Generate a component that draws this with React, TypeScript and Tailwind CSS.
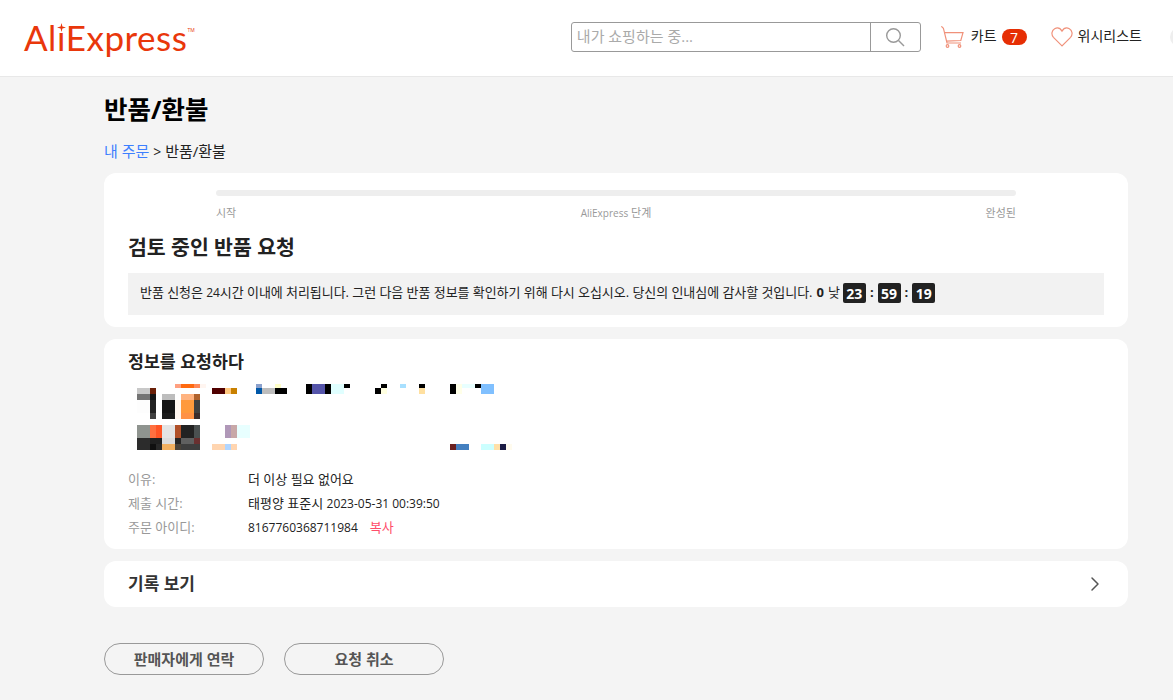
import { ChevronRight } from 'lucide-react';

type Block = [number, number, number, number, string];

// blurred product picture and title, page coords minus the svg origin (128, 384)
const mosaic: Block[] = [
  [175, 384, 6, 4, '#ffa080'], [181, 384, 13, 4, '#ff6a10'], [194, 384, 6, 4, '#ff8a5a'], [200, 384, 6, 4, '#fff5f0'],
  [137, 388, 13, 6, '#c8c8c8'], [150, 388, 6, 6, '#6a2008'],
  [137, 394, 13, 6, '#737373'], [150, 394, 6, 6, '#151515'], [162, 394, 13, 6, '#bdbdbd'], [181, 394, 13, 6, '#ffb380'], [194, 394, 6, 6, '#b0622c'],
  [137, 400, 13, 13, '#fdfdfd'], [150, 400, 6, 13, '#222222'], [162, 400, 13, 13, '#151515'], [175, 400, 6, 19, '#fff7f0'], [181, 400, 13, 13, '#ff9a3c'], [194, 400, 6, 13, '#404040'],
  [150, 413, 6, 6, '#404040'], [162, 413, 13, 6, '#1c1c1c'], [181, 413, 13, 6, '#ff9245'], [194, 413, 6, 6, '#3a2c2c'],
  [137, 425, 13, 13, '#8f948f'], [150, 425, 6, 13, '#ff7040'], [156, 425, 6, 13, '#ff5525'], [162, 425, 13, 13, '#e4e4e4'], [175, 425, 6, 13, '#b05028'], [181, 425, 13, 13, '#222222'], [194, 425, 6, 13, '#4a5050'],
  [137, 438, 13, 12, '#2c2c2c'], [150, 438, 12, 6, '#202020'], [162, 438, 13, 6, '#dcdcdc'], [175, 438, 6, 6, '#252525'], [181, 438, 13, 6, '#606060'], [194, 438, 6, 6, '#6a3030'],
  [150, 444, 6, 6, '#101010'], [156, 444, 6, 6, '#282828'], [162, 444, 13, 6, '#f2b060'], [175, 444, 6, 6, '#4a4238'], [181, 444, 19, 6, '#3e3e3e'],
  [212, 388, 13, 6, '#500000'], [225, 388, 6, 6, '#ffc880'], [231, 388, 6, 6, '#c88000'],
  [256, 384, 6, 4, '#8aa0cc'], [275, 384, 6, 4, '#ffffc8'], [256, 388, 6, 6, '#0058a8'], [262, 388, 13, 6, '#bdbdbd'], [275, 388, 12, 6, '#000000'],
  [306, 384, 6, 10, '#000000'], [312, 384, 13, 10, '#5555aa'], [325, 384, 6, 10, '#000000'], [331, 384, 13, 10, '#e0ffff'], [344, 384, 6, 4, '#000000'],
  [375, 388, 6, 6, '#000000'], [381, 384, 6, 4, '#000000'], [381, 388, 6, 6, '#ffffe0'], [400, 384, 6, 4, '#a8e0ff'],
  [419, 384, 6, 4, '#000000'], [419, 388, 6, 6, '#ffe0a0'],
  [450, 384, 6, 10, '#000000'], [456, 384, 6, 10, '#ffffe8'], [462, 384, 13, 4, '#e8ffff'], [475, 384, 6, 4, '#000000'], [481, 384, 13, 10, '#80c0ff'],
  [212, 444, 13, 6, '#ffd5b0'], [225, 444, 6, 6, '#b0d5ff'], [231, 444, 6, 6, '#ffd5b0'],
  [225, 425, 6, 13, '#b098b8'], [231, 425, 6, 13, '#c8a8a8'], [237, 425, 13, 13, '#e8ffff'],
  [450, 444, 6, 6, '#6a2020'], [456, 444, 13, 6, '#4480c0'], [481, 444, 13, 6, '#ccffff'], [494, 444, 6, 6, '#ffe0a8'], [500, 444, 6, 6, '#1c1c44'], [506, 444, 6, 6, '#fffbee'],
];

const Mosaic = () => (
  <svg width="384" height="66" viewBox="128 384 384 66" shapeRendering="crispEdges" className="block">
    {mosaic.map(([x, y, w, h, c], i) => (
      <rect key={i} x={x} y={y} width={w} height={h} fill={c} />
    ))}
  </svg>
);

const CartIcon = () => (
  <svg width="23" height="22" viewBox="0 0 23 22" fill="none" stroke="#f0917a" strokeWidth="1.2">
    <path d="M.3.3 2.4 2.2 6 17h14" />
    <path d="M3.5 6.7H22L19.8 14.5 5.2 15.2" />
    <circle cx="6.5" cy="20" r="1.3" />
    <circle cx="18.5" cy="20" r="1.3" />
  </svg>
);

const HeartIcon = () => (
  <svg width="22" height="20" viewBox="0 0 24 22" fill="none" stroke="#f0917a" strokeWidth="1.3">
    <path d="M12 20.8 2.6 11.4C-.2 8.4.7 3.6 3.9 1.9c3-1.5 6.3-.4 8.1 2.6 1.8-3 5.1-4.1 8.1-2.6 3.2 1.7 4.1 6.5 1.3 9.5z" />
  </svg>
);

const SearchIcon = () => (
  <svg width="20" height="20" viewBox="0 0 20 20" fill="none" stroke="#999999" strokeWidth="1.4">
    <circle cx="8.5" cy="8.5" r="6.8" />
    <path d="m13.5 13.5 5.5 5.5" />
  </svg>
);

const Timer = ({ value }: { value: string }) => (
  <span className="inline-flex h-[20px] w-[23px] items-center justify-center rounded-[2px] bg-[#222222] text-[14px] font-bold text-white">
    {value}
  </span>
);

const InfoRow = ({ label, children }: { label: string; children: React.ReactNode }) => (
  <div className="flex h-[24px] items-center text-[13px]">
    <span className="w-[120px] text-[#999999]">{label}</span>
    <span className="text-[#222222]">{children}</span>
  </div>
);

const App = () => {
  return (
    <div className="h-[700px] overflow-hidden bg-[#f4f4f4] font-['Open_Sans','Noto_Sans_CJK_KR',sans-serif] text-[#222222]">
      <header className="flex h-[77px] items-center justify-between overflow-hidden border-b border-[#e8e8e8] bg-white pb-[2px] pl-[24px]">
        <div className="flex items-start">
          <span className="font-['Lato',sans-serif] text-[35px] leading-none tracking-[0.5px] text-[#e9370b]">
            Al
            <span className="relative">
              ı
              <svg width="9" height="9" viewBox="0 0 10 10" className="absolute top-[7px] left-0">
                <path d="M5 0 6 4 10 5 6 6 5 10 4 6 0 5 4 4z" fill="#e9370b" />
              </svg>
            </span>
            Express
          </span>
          <span className="mt-[8px] text-[5px] leading-none text-[#e9370b]">TM</span>
        </div>
        <div className="flex items-center">
          <div className="flex h-[30px] w-[350px] overflow-hidden rounded-[3px] border border-[#999999]">
            <div className="flex-1 pl-[5px] text-[15px] leading-[26px] text-[#aaaaaa]">내가 쇼핑하는 중...</div>
            <div className="flex w-[50px] items-center justify-center border-l border-[#999999]">
              <SearchIcon />
            </div>
          </div>
          <div className="ml-[20px] flex items-center">
            <CartIcon />
            <span className="mb-[4px] ml-[7px] text-[14px]">카트</span>
            <span className="ml-[5px] flex h-[16px] w-[25px] items-center justify-center rounded-full bg-[#e62e04] text-[14px] text-white">7</span>
          </div>
          <div className="ml-[24px] flex items-center">
            <HeartIcon />
            <span className="mb-[4px] ml-[5px] text-[14px]">위시리스트</span>
          </div>
          <div className="ml-[28px] mr-[-17px] h-[20px] w-[20px] shrink-0 rounded-full bg-[#eeeeee]" />
        </div>
      </header>

      <main className="mx-[104px] w-[1024px]">
        <h1 className="mt-[14px] text-[25.5px] leading-[36px] font-bold text-black">반품/환불</h1>
        <div className="mt-[14px] h-[20px] text-[15px] leading-[20px]">
          <span className="text-[#3d7fff]">내 주문</span> <span className="text-[14px]">&gt;</span> <span>반품/환불</span>
        </div>

        <section className="mt-[12px] h-[154px] rounded-[12px] bg-white px-[24px] pt-[17px]">
          <div className="mx-[88px]">
            <div className="h-[6px] rounded-full bg-[#eeeeee]" />
            <div className="mt-[9px] grid h-[15px] grid-cols-3 text-[11px] leading-[15px] text-[#999999]">
              <span>시작</span>
              <span className="text-center"><span className="text-[10px]">AliExpress</span> 단계</span>
              <span className="text-right">완성된</span>
            </div>
          </div>
          <h2 className="mt-[14px] text-[20.5px] leading-[27px] font-bold">검토 중인 반품 요청</h2>
          <div className="mt-[12px] flex h-[42px] items-center gap-[4px] bg-[#f2f2f2] px-[12px] pb-[2px] text-[13px]">
            <span className="tracking-[-0.05px]">반품 신청은 <span className="text-[12px]">24</span>시간 이내에 처리됩니다. 그런 다음 반품 정보를 확인하기 위해 다시 오십시오. 당신의 인내심에 감사할 것입니다.</span>
            <span className="font-bold">0</span>
            <span className="mr-[-1px]">낮</span>
            <Timer value="23" />
            <span className="font-bold">:</span>
            <Timer value="59" />
            <span className="font-bold">:</span>
            <Timer value="19" />
          </div>
        </section>

        <section className="mt-[12px] h-[210px] rounded-[12px] bg-white pt-[12px] pl-[24px]">
          <h3 className="text-[17.3px] leading-[22px] font-bold">정보를 요청하다</h3>
          <div className="mt-[11px]">
            <Mosaic />
          </div>
          <div className="mt-[18px]">
            <InfoRow label="이유:">더 이상 필요 없어요</InfoRow>
            <InfoRow label="제출 시간:">
              태평양 표준시 <span className="text-[12px]">2023-05-31 00:39:50</span>
            </InfoRow>
            <InfoRow label="주문 아이디:">
              <span className="text-[12px]">8167760368711984</span>
              <span className="ml-[12px] text-[#ff4d6a]">복사</span>
            </InfoRow>
          </div>
        </section>

        <section className="mt-[12px] flex h-[46px] items-center justify-between rounded-[12px] bg-white pr-[21px] pl-[24px]">
          <span className="text-[17px] font-bold text-[#333333]">기록 보기</span>
          <ChevronRight size={24} strokeWidth={1.5} className="text-[#555555]" />
        </section>

        <div className="mt-[36px] flex gap-[20px]">
          <button className="h-[32px] w-[160px] rounded-full border border-[#999999] text-[15px] font-bold text-[#555555]">판매자에게 연락</button>
          <button className="h-[32px] w-[160px] rounded-full border border-[#999999] text-[15px] font-bold text-[#555555]">요청 취소</button>
        </div>
      </main>
    </div>
  );
};

export default App;
